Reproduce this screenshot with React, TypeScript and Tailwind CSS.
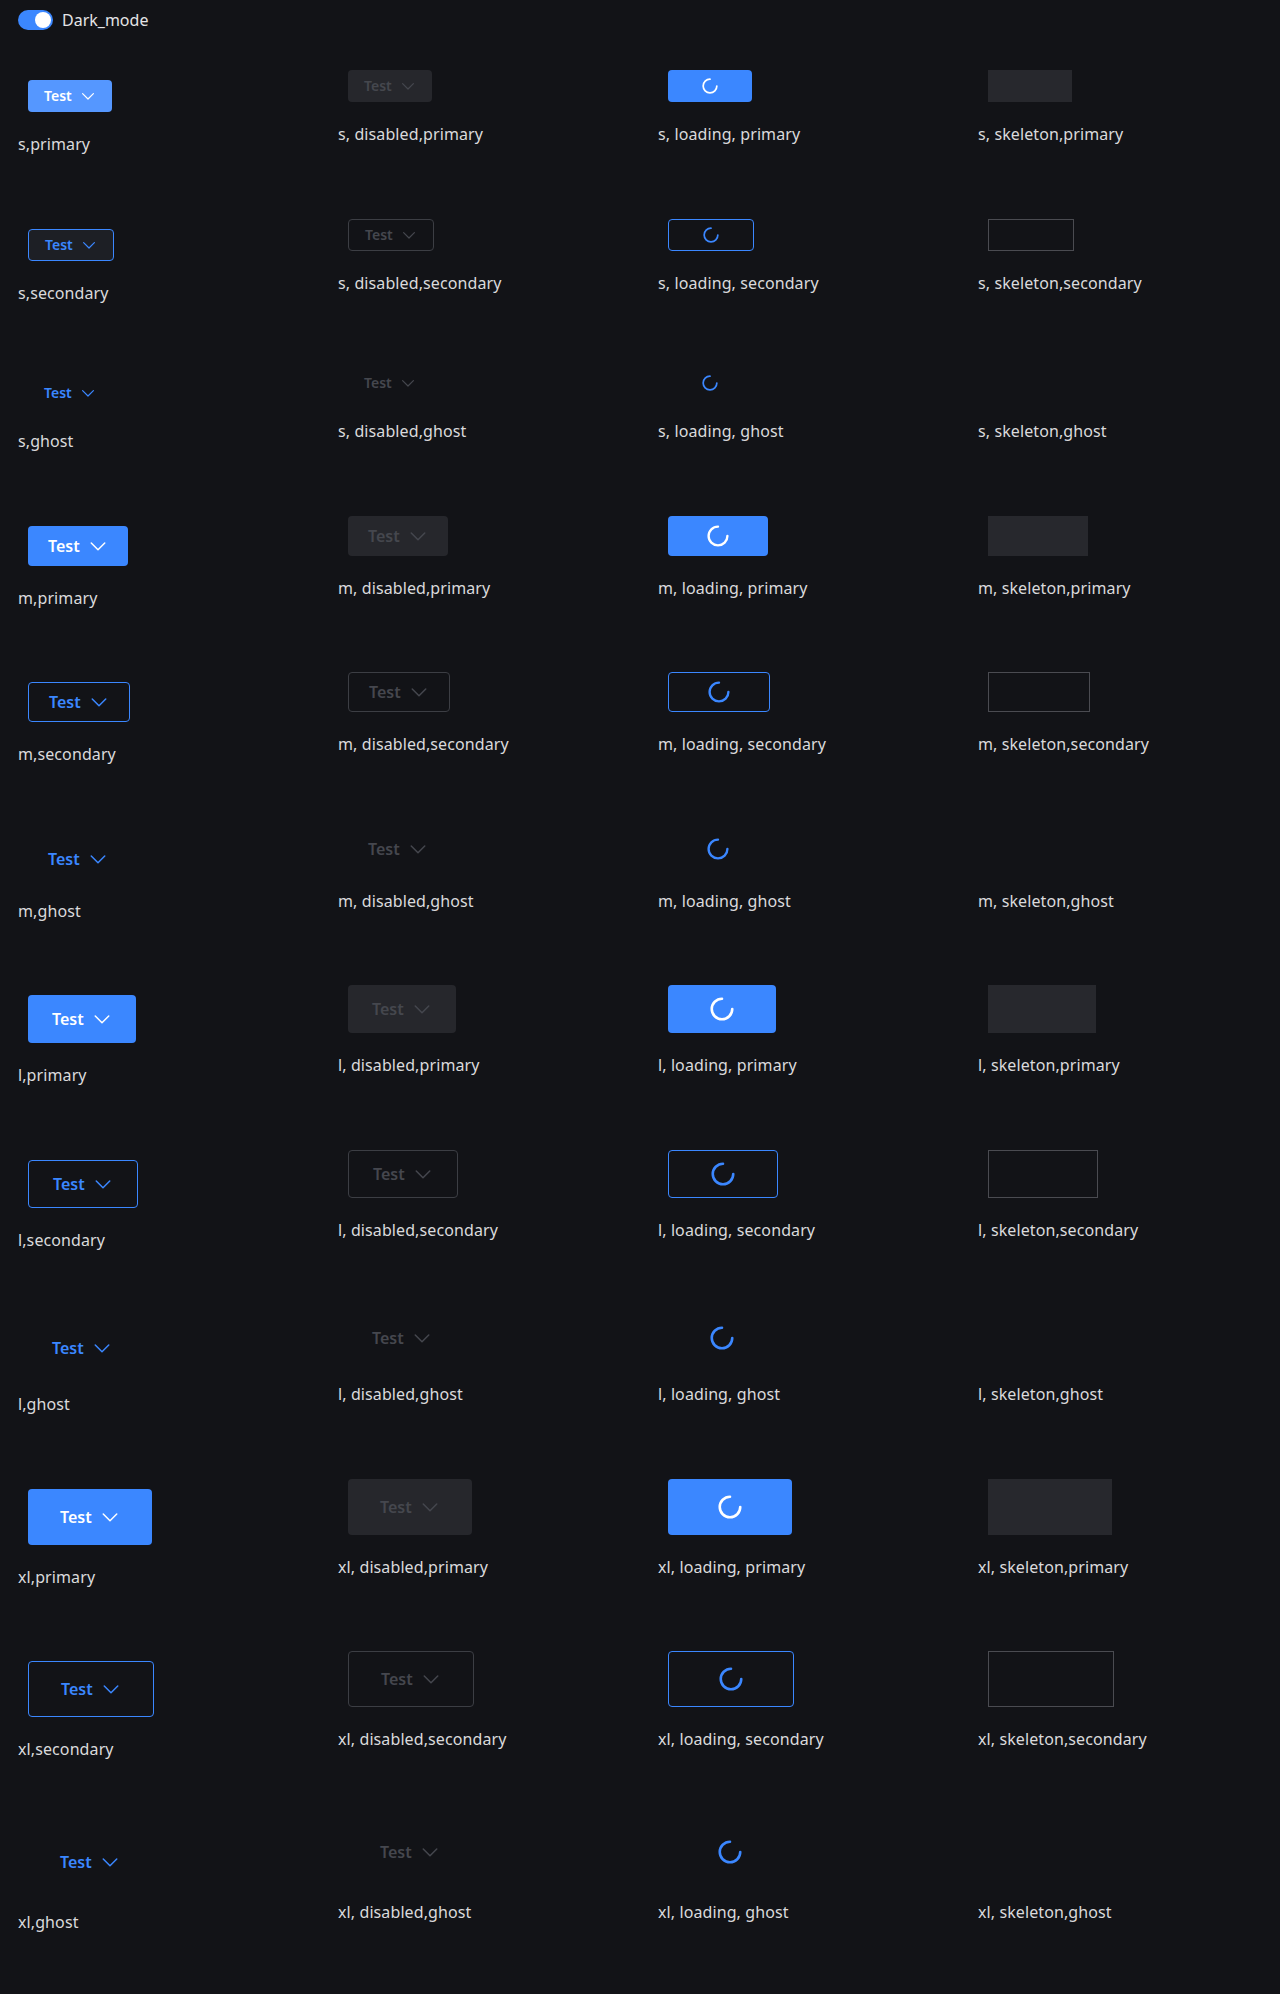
import React from 'react'

type Size = 's' | 'm' | 'l' | 'xl'
type Variant = 'primary' | 'secondary' | 'ghost'
type State = 'normal' | 'disabled' | 'loading' | 'skeleton'

const sizeClass: Record<Size, string> = {
  s: 'h-8 px-4 text-[14px]',
  m: 'h-10 px-5 text-[16px]',
  l: 'h-12 px-6 text-[16px]',
  xl: 'h-14 px-8 text-[16px]',
}

const iconSize: Record<Size, number> = { s: 16, m: 20, l: 20, xl: 20 }
const spinnerSize: Record<Size, number> = { s: 16, m: 22, l: 24, xl: 24 }

function Chevron({ size }: { size: number }) {
  return (
    <svg width={size} height={size} viewBox="0 0 16 16" fill="none" className="shrink-0">
      <path d="M2.6 5.6 8 11 13.4 5.6" stroke="currentColor" strokeWidth="1.2" strokeLinecap="round" strokeLinejoin="round" />
    </svg>
  )
}

function Spinner({ size }: { size: number }) {
  // 270deg arc from 12 o'clock round the left side to 3 o'clock
  return (
    <svg width={size} height={size} viewBox="0 0 24 24" fill="none">
      <path d="M12 1.75 A10.25 10.25 0 1 0 22.25 12" stroke="currentColor" strokeWidth="2.6" strokeLinecap="round" />
    </svg>
  )
}

function Button({
  size,
  variant,
  state,
  hover = false,
}: {
  size: Size
  variant: Variant
  state: State
  hover?: boolean
}) {
  if (state === 'skeleton') {
    const skin =
      variant === 'primary'
        ? 'bg-[#27282d]'
        : variant === 'secondary'
          ? 'border border-[#4a4b51]'
          : ''
    return (
      <div className={`inline-flex items-center gap-2 font-semibold ${sizeClass[size]} ${skin}`}>
        <span className="invisible">Test</span>
        <span className="invisible">
          <Chevron size={iconSize[size]} />
        </span>
      </div>
    )
  }

  let skin = ''
  if (state === 'disabled') {
    skin =
      variant === 'primary'
        ? 'bg-[#26272c] text-[#45474e]'
        : variant === 'secondary'
          ? 'border border-[#3c3e44] text-[#45474e]'
          : 'text-[#45474e]'
  } else if (variant === 'primary') {
    skin = hover ? 'bg-[#5597ff] text-white' : 'bg-[#3b87ff] text-white'
  } else if (variant === 'secondary') {
    skin = hover
      ? 'border border-[#3b87ff] bg-[#1d1f25] text-[#3b87ff]'
      : 'border border-[#3b87ff] text-[#3b87ff]'
  } else {
    skin = 'text-[#3b87ff]'
  }

  const loading = state === 'loading'

  return (
    <button
      type="button"
      className={`relative inline-flex items-center gap-2 rounded-[4px] font-semibold leading-none ${sizeClass[size]} ${skin}`}
    >
      <span className={loading ? 'invisible' : ''}>Test</span>
      <span className={loading ? 'invisible' : 'flex'}>
        <Chevron size={iconSize[size]} />
      </span>
      {loading && (
        <span className={`absolute inset-0 flex items-center justify-center ${variant === 'primary' ? 'text-white' : 'text-[#3b87ff]'}`}>
          <Spinner size={spinnerSize[size]} />
        </span>
      )}
    </button>
  )
}

const sizes: Size[] = ['s', 'm', 'l', 'xl']
const variants: Variant[] = ['primary', 'secondary', 'ghost']

function Cell({
  size,
  variant,
  state,
}: {
  size: Size
  variant: Variant
  state: State
}) {
  const label =
    state === 'normal'
      ? `${size},${variant}`
      : state === 'disabled'
        ? `${size}, disabled,${variant}`
        : state === 'loading'
          ? `${size}, loading, ${variant}`
          : `${size}, skeleton,${variant}`
  const first = state === 'normal'
  return (
    <div className={`flex flex-col items-start pl-[18px] ${first ? 'pt-[10px] pb-[62.5px]' : 'pb-[72.5px]'}`}>
      <div className="ml-[10px] flex">
        <Button size={size} variant={variant} state={state} hover={first && size === 's' && variant !== 'ghost'} />
      </div>
      <p className="mt-5 text-[16px] leading-6 tracking-[0.1px] text-[#dadadc]">{label}</p>
    </div>
  )
}

export default function App() {
  return (
    <div className="min-h-[1994px] bg-[#121317] font-['Noto_Sans',sans-serif]">
      <div className="flex items-center gap-[9px] pl-[18px] pt-[10px]">
        <div className="flex h-5 w-[35px] items-center justify-end rounded-full bg-[#3b87ff] pr-[2px]">
          <div className="h-4 w-4 rounded-full bg-white" />
        </div>
        <span className="text-[16px] leading-5 text-[#e4e4e6]">Dark_mode</span>
      </div>
      <div className="mt-10">
        {sizes.map((size) =>
          variants.map((variant) => (
            <div key={`${size}-${variant}`} className="grid grid-cols-4">
              <Cell size={size} variant={variant} state="normal" />
              <Cell size={size} variant={variant} state="disabled" />
              <Cell size={size} variant={variant} state="loading" />
              <Cell size={size} variant={variant} state="skeleton" />
            </div>
          )),
        )}
      </div>
    </div>
  )
}
